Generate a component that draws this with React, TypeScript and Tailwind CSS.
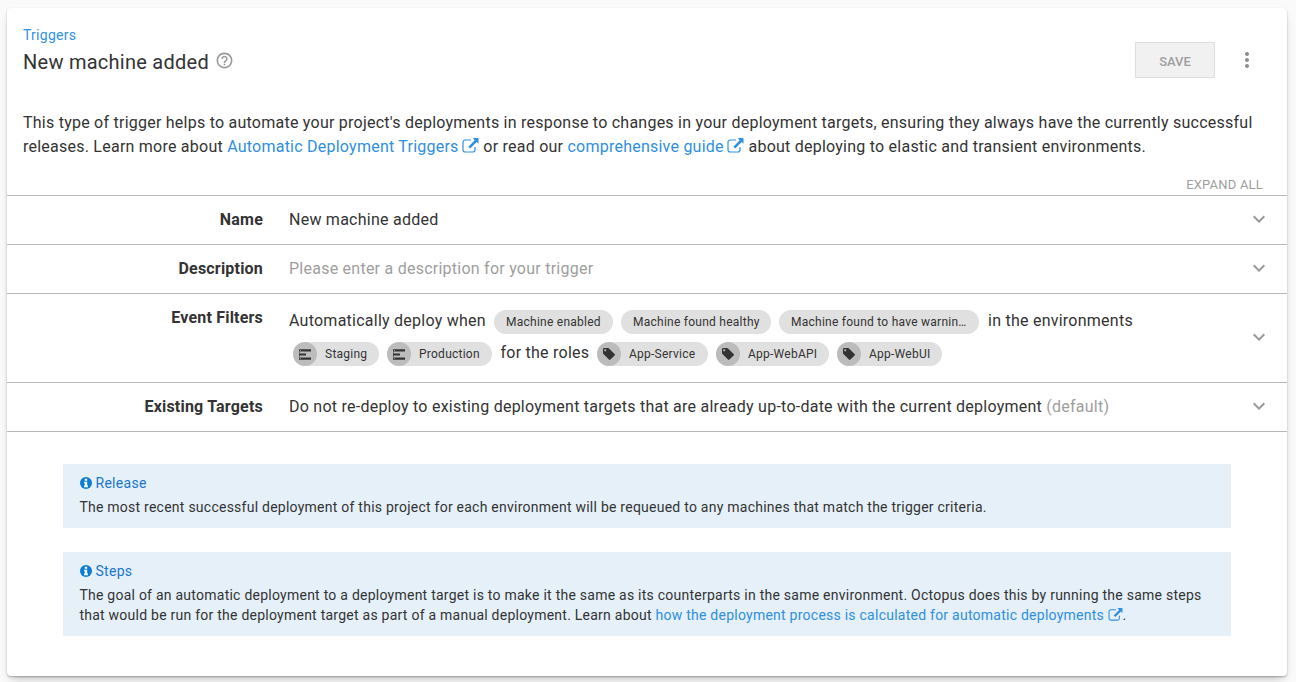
import React from "react";
import { MdExpandMore, MdHelpOutline, MdMoreVert } from "react-icons/md";

function ExternalIcon({ small = false }: { small?: boolean }) {
  return (
    <svg viewBox="0 0 17 15" className={small ? "ml-[3.5px] inline-block h-[13px] w-[15px] align-[-1px]" : "ml-[3.5px] inline-block h-[15px] w-[17px] align-[-1px]"} fill="none">
      <path d="M9 2H3.2A2.2 2.2 0 0 0 1 4.2v7.6A2.2 2.2 0 0 0 3.2 14h7.6a2.2 2.2 0 0 0 2.2-2.2V9" stroke="currentColor" strokeWidth="1.2" />
      <path d="M10.8 0H16.500V5.700L14.700 4L8.200 10.500L6.400 8.700L12.700 2.200Z" fill="currentColor" />
    </svg>
  );
}

function InfoIcon() {
  return (
    <svg viewBox="0 0 12 12" className="mr-1 ml-[0.5px] h-3 w-3">
      <circle cx="6" cy="6" r="6" fill="#0d7cd6" />
      <path d="M4.800 1.800h2.400v1.900H4.800zM4 4.700h3.200v3.800H8V10.200H4V8.500h.8V6.300H4z" fill="#fff" />
    </svg>
  );
}

function EnvIcon() {
  return (
    <svg viewBox="0 0 12 11" className="h-[11px] w-3" fill="#333">
      <path d="M0 0.300h12v2.200H0zM0 4.400h7v2.200H0zM0 8.500h12v2.200H0z" />
      <path d="M0 2.500h1v6H0z" fillOpacity=".5" />
      <path d="M1 1h1v.8H1zM1 9.200h1v.8H1z" fill="#bcbcbc" />
    </svg>
  );
}

function TagIcon() {
  return (
    <svg viewBox="0 0 12 12" className="h-3 w-3">
      <path fill="#333" fillRule="evenodd" d="M0 1.2Q0 0 1.2 0H5q.6 0 1 .4L11.6 6q.7.7 0 1.4l-4.2 4.2q-.7.7-1.4 0L.4 6Q0 5.600 0 5zM2.200 1.200a1 1 0 1 0 .01 0z" />
    </svg>
  );
}

function Chip({ label, className, icon }: { label: string; className: string; icon?: React.ReactNode }) {
  return (
    <span className={"flex h-6 shrink-0 items-center rounded-full bg-[#e0e0e0] text-[12px] whitespace-nowrap text-[#333] " + className}>
      {icon && <span className="mr-2 flex h-6 w-6 shrink-0 items-center justify-center rounded-full bg-[#bcbcbc]">{icon}</span>}
      <span className={icon ? "tracking-[0.25px]" : "pl-3 tracking-[0.25px]"}>{label}</span>
    </span>
  );
}

function Row({ label, children, tall = false }: { label: string; children: React.ReactNode; tall?: boolean }) {
  return (
    <div className={"flex border-b border-[#b8b8b8] text-[16px] leading-6 " + (tall ? "h-[89px]" : "h-[49px]")}>
      <div className="w-[256px] shrink-0 pt-3 text-right font-bold tracking-[0.2px]">{label}</div>
      <div className="ml-[26px] grow pt-3 whitespace-nowrap tracking-[0.245px]">{children}</div>
      <div className="mr-4 flex w-6 items-center justify-center pb-[2px] text-[#999]">
        <MdExpandMore size={24} />
      </div>
    </div>
  );
}

function Callout({ title, children }: { title: string; children: React.ReactNode }) {
  return (
    <section className="mx-14 bg-[#e5f0f9] px-4 pt-[9px] pb-[11px] text-[14px] leading-5 whitespace-nowrap">
      <h2 className="mb-1 flex items-center tracking-[0.28px] text-[#1a77ca]">
        <InfoIcon />
        {title}
      </h2>
      <div className="pl-[0.4px] tracking-[0.245px]">{children}</div>
    </section>
  );
}

export default function App() {
  return (
    <div className="h-[682px] overflow-hidden bg-[#fafafa] pt-2 font-[Roboto,sans-serif] text-[#333]">
      <main className="mr-[9px] ml-[7px] h-[668px] rounded-[4px] bg-white shadow-[0_1px_2px_rgba(0,0,0,0.28),0_6px_10px_-4px_rgba(0,0,0,0.25)]">
        <header className="flex h-[102px] pl-4">
          <div className="grow pt-[17px]">
            <a className="block text-[14px] leading-5 tracking-[0.26px] text-[#2f93e0]">Triggers</a>
            <div className="mt-[3px] flex items-center">
              <h1 className="text-[20px] leading-7 tracking-[0.26px]">New machine added</h1>
              <MdHelpOutline size={19} className="mb-[3px] ml-[6.5px] text-[#999]" />
            </div>
          </div>
          <button className="mt-[34px] h-9 w-20 border border-[#dedede] bg-[#f1f1f1] pt-[3px] text-[13px] font-medium text-[#9e9e9e]">SAVE</button>
          <MdMoreVert size={24} className="mt-10 mr-7 ml-5 text-[#8c8c8c]" />
        </header>
        <div className="h-[60px] pt-px pl-4 text-[16px] leading-6 whitespace-nowrap">
          <p className="tracking-[0.24px]">This type of trigger helps to automate your project's deployments in response to changes in your deployment targets, ensuring they always have the currently successful</p>
          <p className="tracking-[0.235px]">
            releases. Learn more about <a className="text-[#2f8fe0]">Automatic Deployment Triggers<ExternalIcon /></a> or read our <a className="text-[#2f8fe0]">comprehensive guide<ExternalIcon /></a> about deploying to elastic and transient environments.
          </p>
        </div>
        <div className="flex h-[26px] items-end justify-end border-b border-[#b8b8b8] pr-6 text-[13px] leading-5 tracking-[0.2px] text-[#9e9e9e]">EXPAND ALL</div>
        <Row label="Name">New machine added</Row>
        <Row label="Description"><span className="text-[#9e9e9e]">Please enter a description for your trigger</span></Row>
        <Row label="Event Filters" tall>
          <div className="mt-1 flex h-6 items-center">
            <span className="-mt-[3px] w-[205px]">Automatically deploy when</span>
            <Chip label="Machine enabled" className="mr-2 w-[119px]" />
            <Chip label="Machine found healthy" className="mr-2 w-[150px]" />
            <Chip label="Machine found to have warnin…" className="mr-[9px] w-[200px]" />
            <span className="-mt-[3px]">in the environments</span>
          </div>
          <div className="mt-2 flex h-6 items-center pl-1">
            <Chip label="Staging" icon={<EnvIcon />} className="mr-2 w-[86px]" />
            <Chip label="Production" icon={<EnvIcon />} className="w-[105px]" />
            <span className="-mt-[3px] w-[105px] pl-[8.5px]">for the roles</span>
            <Chip label="App-Service" icon={<TagIcon />} className="mr-2 w-[111px]" />
            <Chip label="App-WebAPI" icon={<TagIcon />} className="mr-2 w-[113px]" />
            <Chip label="App-WebUI" icon={<TagIcon />} className="w-[105px]" />
          </div>
        </Row>
        <Row label="Existing Targets">
          Do not re-deploy to existing deployment targets that are already up-to-date with the current deployment <span className="text-[#9e9e9e]">(default)</span>
        </Row>
        <div className="flex flex-col gap-6 pt-8">
          <Callout title="Release">
            <p>The most recent successful deployment of this project for each environment will be requeued to any machines that match the trigger criteria.</p>
          </Callout>
          <Callout title="Steps">
            <p>The goal of an automatic deployment to a deployment target is to make it the same as its counterparts in the same environment. Octopus does this by running the same steps</p>
            <p>
              that would be run for the deployment target as part of a manual deployment. Learn about <a className="text-[#2f8fe0]">how the deployment process is calculated for automatic deployments<ExternalIcon small /></a>.
            </p>
          </Callout>
        </div>
      </main>
    </div>
  );
}
